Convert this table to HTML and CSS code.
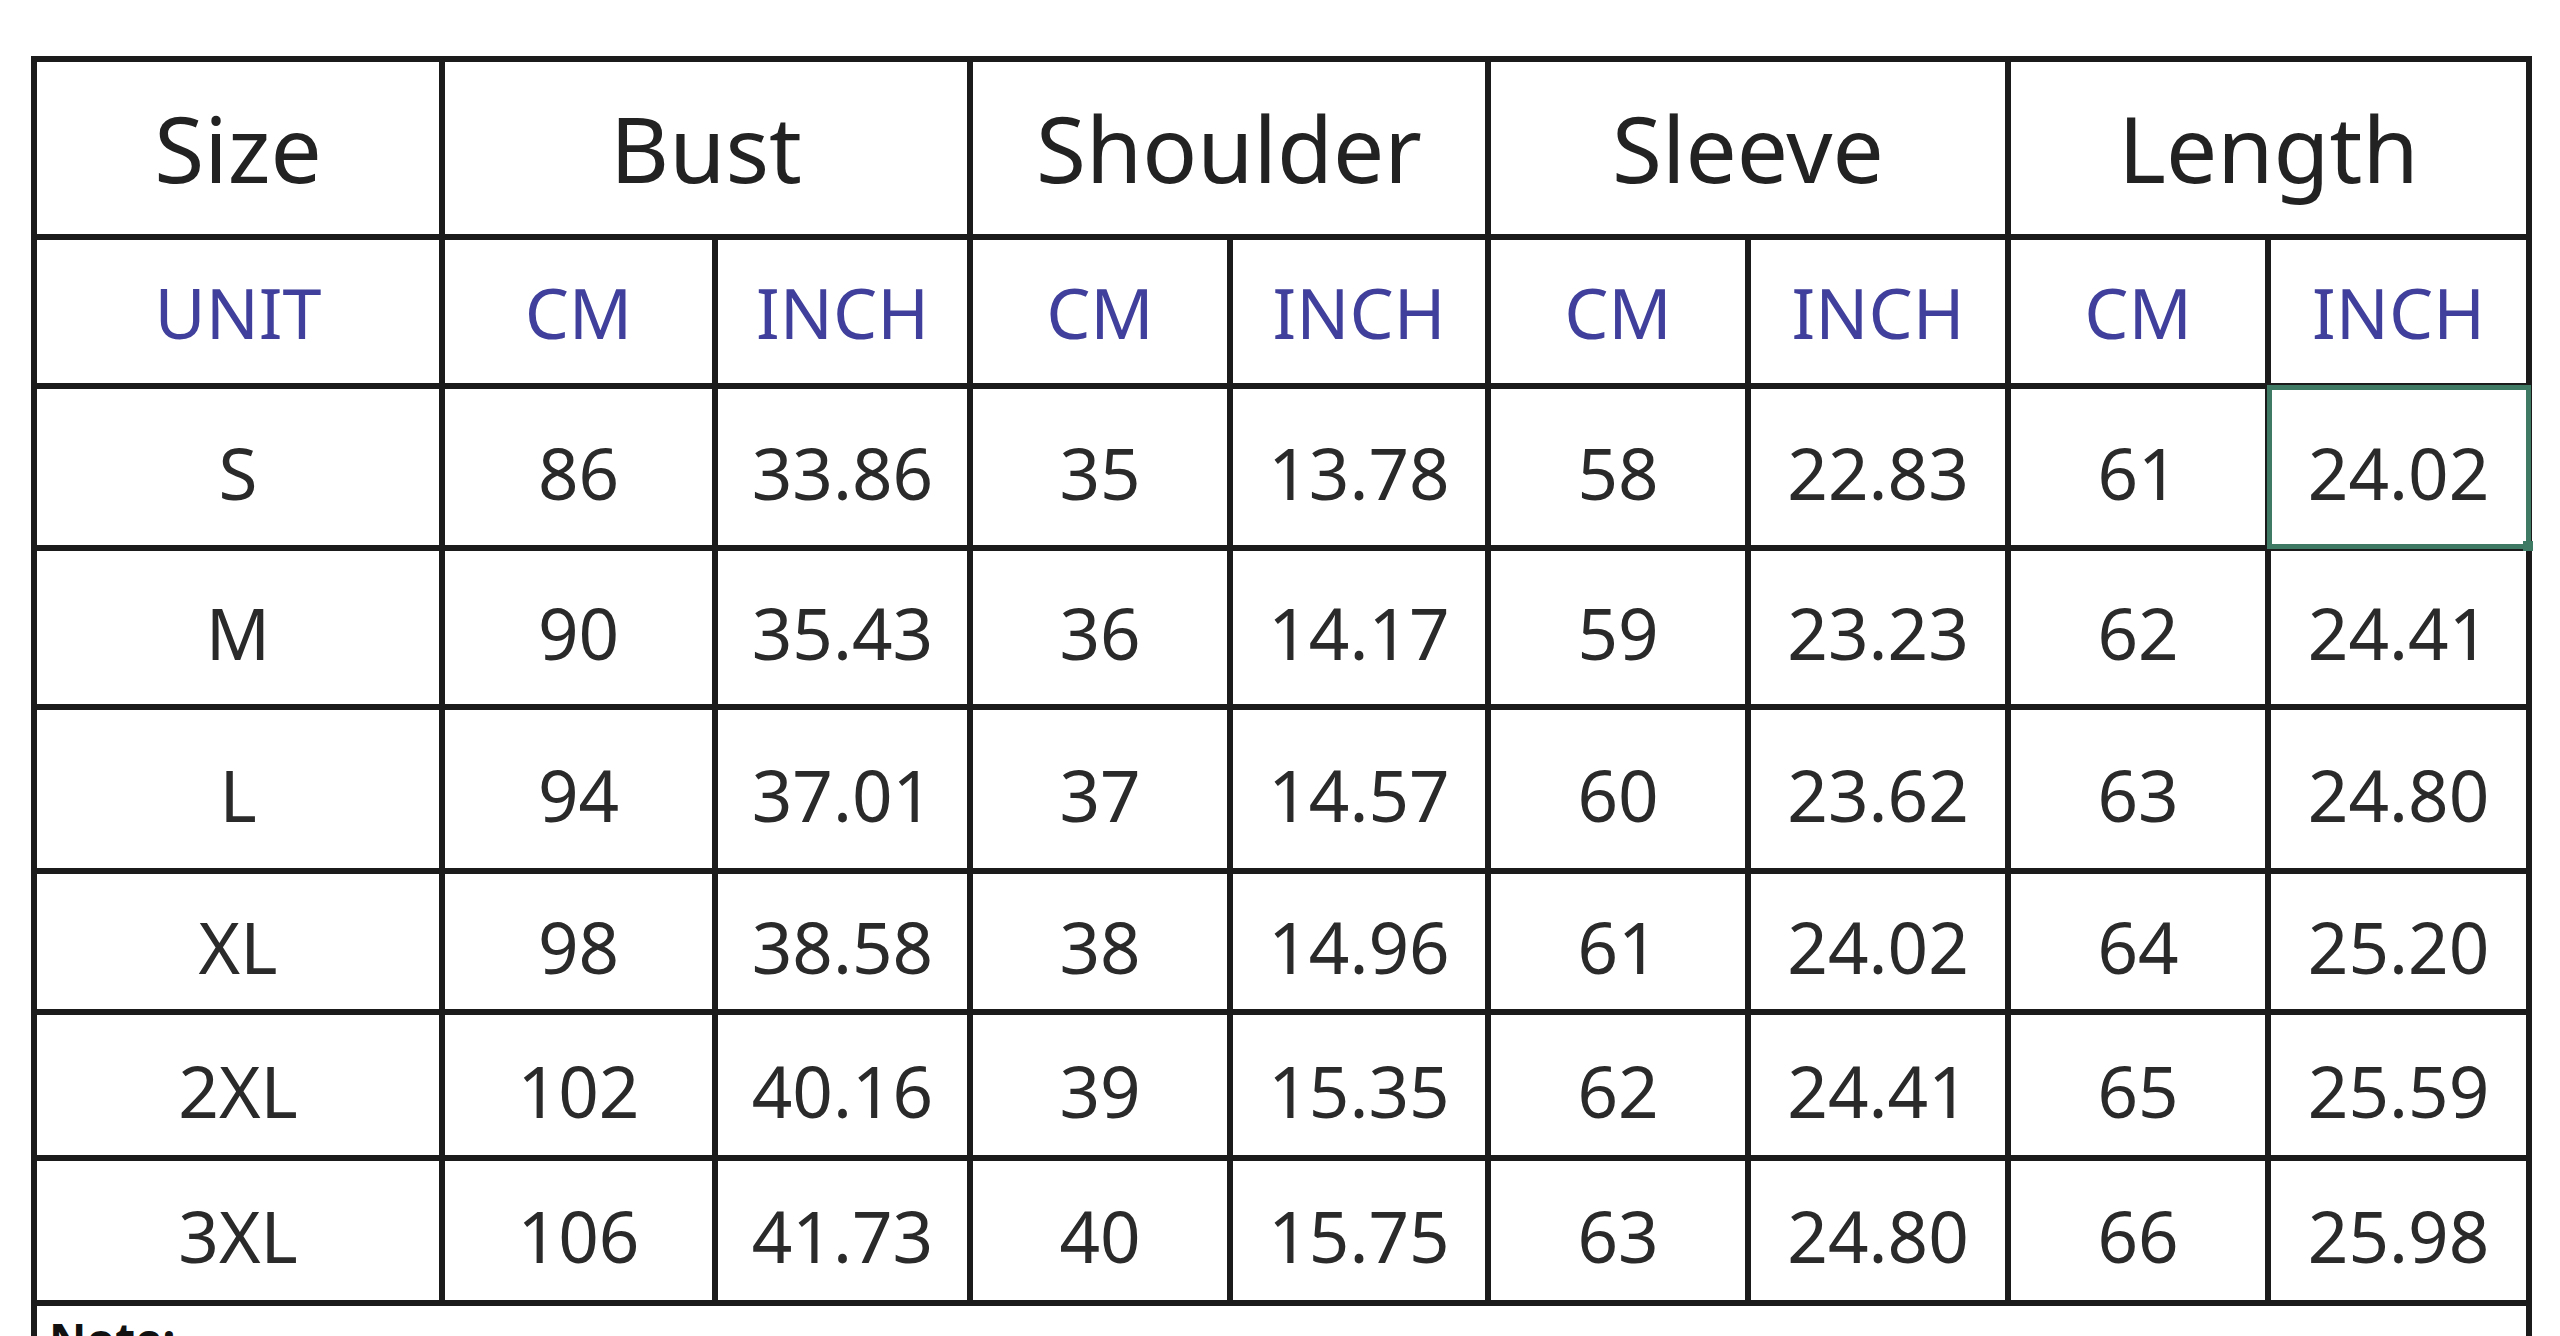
FILE: index.html
```html
<!DOCTYPE html>
<html lang="en">
<head>
<meta charset="utf-8">
<title>Size Chart</title>
<link rel="stylesheet" href="styles.css">
</head>
<body>
<div class="sheet">
  <table class="chart">
    <colgroup>
      <col class="c-size">
      <col class="c-bcm">
      <col class="c-binch">
      <col class="c-scm">
      <col class="c-sinch">
      <col class="c-slcm">
      <col class="c-slinch">
      <col class="c-lcm">
      <col class="c-linch">
    </colgroup>
    <thead>
      <tr class="r-head">
        <th>Size</th>
        <th colspan="2">Bust</th>
        <th colspan="2">Shoulder</th>
        <th colspan="2">Sleeve</th>
        <th colspan="2">Length</th>
      </tr>
      <tr class="r-unit">
        <th>UNIT</th>
        <th>CM</th><th>INCH</th>
        <th>CM</th><th>INCH</th>
        <th>CM</th><th>INCH</th>
        <th>CM</th><th>INCH</th>
      </tr>
    </thead>
    <tbody>
      <tr class="r-s">
        <td>S</td><td>86</td><td>33.86</td><td>35</td><td>13.78</td><td>58</td><td>22.83</td><td>61</td>
        <td class="selected">24.02<span class="sel-frame"><span class="sel-handle"></span></span></td>
      </tr>
      <tr class="r-m">
        <td>M</td><td>90</td><td>35.43</td><td>36</td><td>14.17</td><td>59</td><td>23.23</td><td>62</td><td>24.41</td>
      </tr>
      <tr class="r-l">
        <td>L</td><td>94</td><td>37.01</td><td>37</td><td>14.57</td><td>60</td><td>23.62</td><td>63</td><td>24.80</td>
      </tr>
      <tr class="r-xl">
        <td>XL</td><td>98</td><td>38.58</td><td>38</td><td>14.96</td><td>61</td><td>24.02</td><td>64</td><td>25.20</td>
      </tr>
      <tr class="r-2xl">
        <td>2XL</td><td>102</td><td>40.16</td><td>39</td><td>15.35</td><td>62</td><td>24.41</td><td>65</td><td>25.59</td>
      </tr>
      <tr class="r-3xl">
        <td>3XL</td><td>106</td><td>41.73</td><td>40</td><td>15.75</td><td>63</td><td>24.80</td><td>66</td><td>25.98</td>
      </tr>
      <tr class="r-note">
        <td colspan="9" class="note">Note:</td>
      </tr>
    </tbody>
  </table>
</div>
</body>
</html>
```

FILE: styles.css
```css
html, body {
  margin: 0;
  padding: 0;
  background: #ffffff;
}

body {
  font-family: "Noto Sans", "Open Sans", sans-serif;
  color: #262626;
  overflow: hidden;
}

.sheet {
  padding: 56px 0 0 31px;
}

.chart {
  border-collapse: collapse;
  table-layout: fixed;
  width: 2501px;
}

.chart th,
.chart td {
  border: 6px solid #1b1b1b;
  padding: 0;
  text-align: center;
  vertical-align: middle;
  font-weight: 400;
  white-space: nowrap;
}

.c-size { width: 408px; }
.c-bcm { width: 273px; }
.c-binch { width: 255px; }
.c-scm { width: 260px; }
.c-sinch { width: 258px; }
.c-slcm { width: 260px; }
.c-slinch { width: 260px; }
.c-lcm { width: 260px; }
.c-linch { width: 261px; }

.r-head th {
  height: 172px;
  font-size: 91px;
  color: #222222;
}

.r-unit th {
  height: 143px;
  font-size: 70px;
  color: #40409c;
}

.chart td {
  font-size: 71px;
  color: #2a2a2a;
  padding-top: 10px;
}

.r-s td { height: 146px; }
.r-m td { height: 143px; }
.r-l td { height: 148px; }
.r-xl td { height: 125px; }
.r-2xl td { height: 130px; }
.r-3xl td { height: 129px; }

.chart .r-note td {
  height: 200px;
  border-bottom: none;
  text-align: left;
  vertical-align: top;
  padding: 2px 0 0 12px;
  font-size: 46px;
  font-weight: 700;
  color: #111111;
}

.selected {
  position: relative;
}

.sel-frame {
  position: absolute;
  left: -4px;
  top: -4px;
  right: -5px;
  bottom: -4px;
  border: 5px solid #3f7b64;
  pointer-events: none;
}

.sel-handle {
  position: absolute;
  right: -7px;
  bottom: -7px;
  width: 10px;
  height: 10px;
  background: #3f7b64;
}
```
